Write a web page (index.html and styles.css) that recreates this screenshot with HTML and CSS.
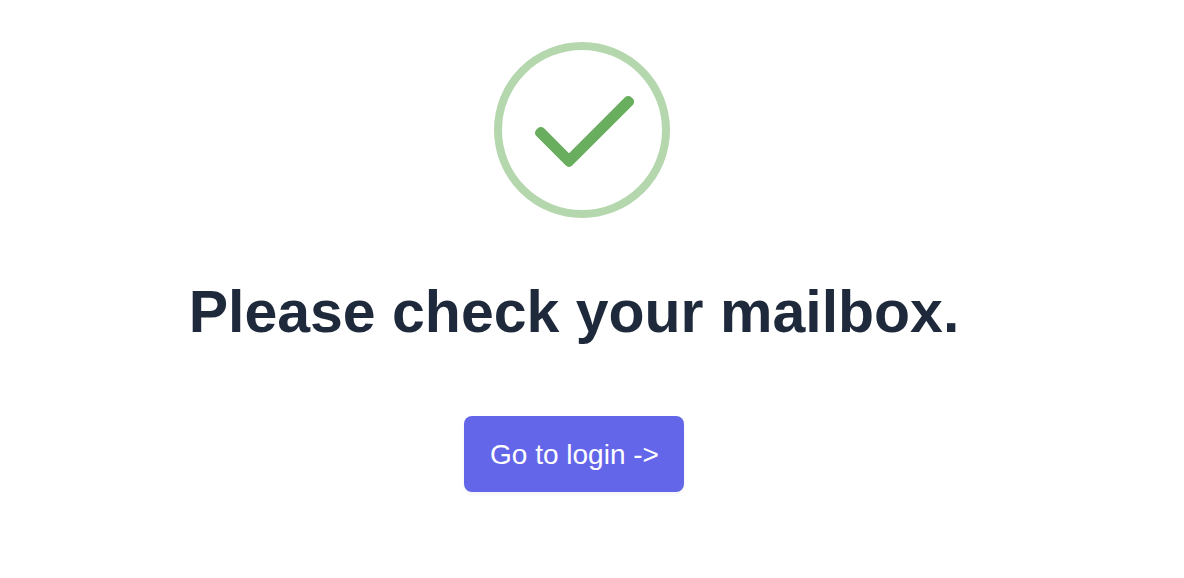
FILE: index.html
```html
<!DOCTYPE html>
<html lang="en">
<head>
<meta charset="utf-8">
<meta name="viewport" content="width=device-width, initial-scale=1">
<title>Check your mailbox</title>
<link rel="stylesheet" href="styles.css">
</head>
<body>
<main class="confirmation">
  <svg class="success-icon" viewBox="0 0 176 176" aria-hidden="true">
    <circle class="success-ring" cx="88" cy="88" r="84"/>
    <path class="success-check" d="M45.5 90.9 46.9 89.5 75 117.6 134.2 58.4 135.6 59.8 75 120.4Z"/>
  </svg>
  <h1 class="title">Please check your mailbox.</h1>
  <a class="login-button" href="#login">Go to login -&gt;</a>
</main>
</body>
</html>
```
FILE: styles.css
```css
* {
  box-sizing: border-box;
}

body {
  margin: 0;
  background: #fff;
  color: #1e293b;
  font-family: "Liberation Sans", Arial, sans-serif;
}

.confirmation {
  display: flex;
  flex-direction: column;
  align-items: center;
  padding: 42px 36px 42px 0;
}

.success-icon {
  width: 176px;
  margin-left: 16px;
  fill: none;
}

.success-ring {
  stroke: #b4d7ad;
  stroke-width: 8;
}

.success-check {
  fill: #69ae5e;
  stroke: #69ae5e;
  stroke-width: 9;
  stroke-linejoin: round;
}

.title {
  margin: 59px 0 69px;
  font-size: 59px;
  line-height: 70px;
  text-align: center;
}

.login-button {
  padding: 21px 25px 19px 26px;
  border-radius: 8px;
  background: #6366e9;
  box-shadow: 0 2px 4px rgba(0, 0, 0, 0.05);
  color: #fff;
  font-size: 28px;
  line-height: 36px;
  text-decoration: none;
}
```
